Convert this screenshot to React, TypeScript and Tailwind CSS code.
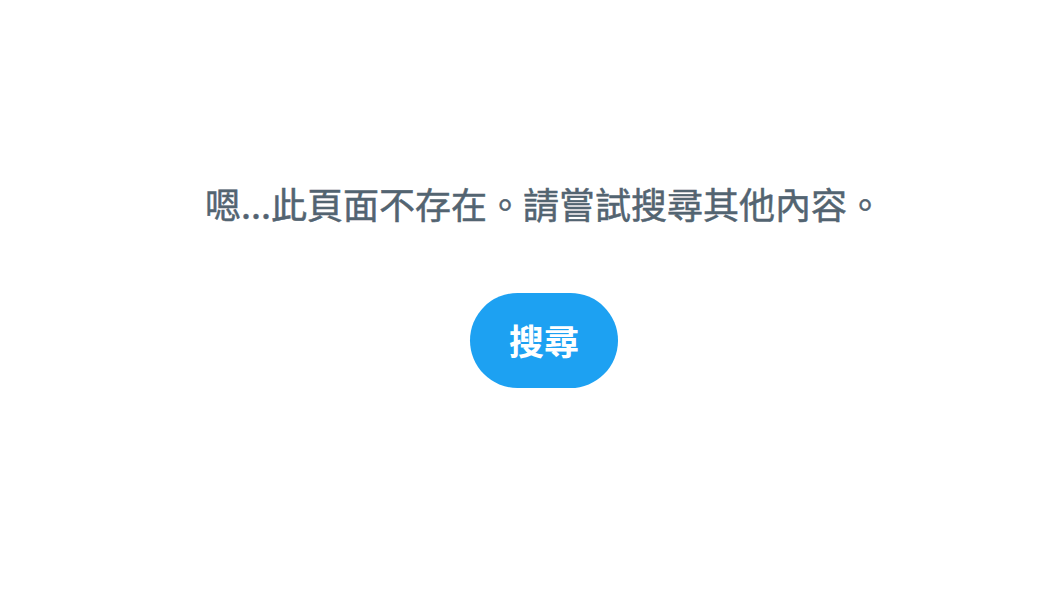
export default function App() {
  return (
    <div
      className="flex h-[596px] w-full flex-col items-center bg-white pl-[28px] pt-[178px]"
      style={{ fontFamily: '"Noto Sans CJK TC", "Noto Sans", sans-serif' }}
    >
      <p className="text-[36px] font-normal leading-[50px] text-[#536471] [-webkit-text-stroke:0.5px_#536471]">
        嗯...此頁面不存在。請嘗試搜尋其他內容。
      </p>
      <button
        type="button"
        className="mt-[65px] flex h-[95px] w-[148px] items-center justify-center rounded-full bg-[#1da1f2] text-[35px] font-bold text-white"
      >
        搜尋
      </button>
    </div>
  );
}
